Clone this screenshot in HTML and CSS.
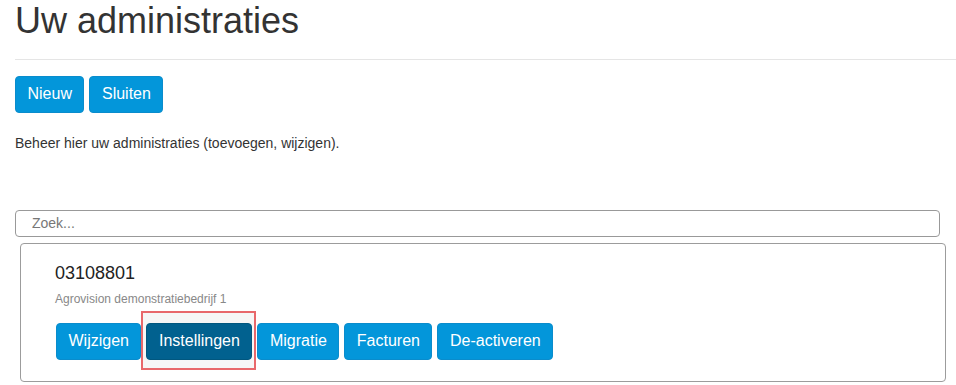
FILE: index.html
```html
<!DOCTYPE html>
<html lang="nl">
<head>
  <meta charset="UTF-8">
  <title>Uw administraties</title>
  <link rel="stylesheet" href="styles.css">
</head>
<body>
  <div class="page">
    <h1 class="page-header">Uw administraties</h1>

    <div class="toolbar">
      <button class="btn">Nieuw</button>
      <button class="btn">Sluiten</button>
    </div>

    <p class="intro">Beheer hier uw administraties (toevoegen, wijzigen).</p>

    <input class="search" type="text" placeholder="Zoek...">

    <div class="card">
      <div class="card-title">03108801</div>
      <div class="card-sub">Agrovision demonstratiebedrijf 1</div>
      <div class="card-actions">
        <button class="btn">Wijzigen</button>
        <span class="highlight"><button class="btn btn-active">Instellingen</button></span>
        <button class="btn">Migratie</button>
        <button class="btn">Facturen</button>
        <button class="btn">De-activeren</button>
      </div>
    </div>
  </div>
</body>
</html>
```

FILE: styles.css
```css
body {
  margin: 0;
  padding: 0;
  background-color: #fff;
  font-family: "Liberation Sans", Arial, sans-serif;
  color: #333;
}
.page {
  padding-left: 15px;
}
.page-header {
  margin: 0;
  padding: 1px 0 18px;
  font-size: 36px;
  font-weight: normal;
  line-height: 1.1;
  border-bottom: 1px solid #e5e5e5;
}
.toolbar {
  display: flex;
  gap: 5px;
  margin-top: 16px;
}
.btn {
  font-family: "Liberation Sans", Arial, sans-serif;
  font-size: 16px;
  color: #fff;
  background-color: #0396da;
  border: 1px solid #0a8ccc;
  border-radius: 4px;
  height: 37px;
  padding: 0 11.5px;
  cursor: pointer;
}
.btn-active {
  background-color: #01618f;
  border-color: #01577f;
}
.intro {
  margin: 21px 0 0;
  font-size: 14px;
  line-height: 18px;
}
.search {
  display: block;
  box-sizing: border-box;
  width: 925px;
  height: 27px;
  margin-top: 58px;
  padding: 0 16px;
  font-family: "Liberation Sans", Arial, sans-serif;
  font-size: 14px;
  border: 1px solid #999;
  border-radius: 4px;
}
.search::placeholder {
  color: #777;
}
.card {
  box-sizing: border-box;
  width: 926px;
  margin: 6px 0 0 5px;
  padding: 18px 34px 21px;
  border: 1px solid #9c9c9c;
  border-radius: 4px;
}
.card-title {
  font-size: 18px;
  line-height: 22px;
  color: #222;
}
.card-sub {
  margin-top: 8px;
  font-size: 12px;
  color: #888;
}
.card-actions {
  display: flex;
  gap: 5px;
  margin-top: 17px;
  padding-left: 1px;
}
.highlight {
  position: relative;
  display: flex;
  z-index: 0;
}
.highlight::before {
  content: "";
  position: absolute;
  top: -12px;
  right: -4px;
  bottom: -10px;
  left: -5px;
  border: 2px solid #e8686b;
  background-color: #f6f6f6;
  z-index: -1;
}
```
